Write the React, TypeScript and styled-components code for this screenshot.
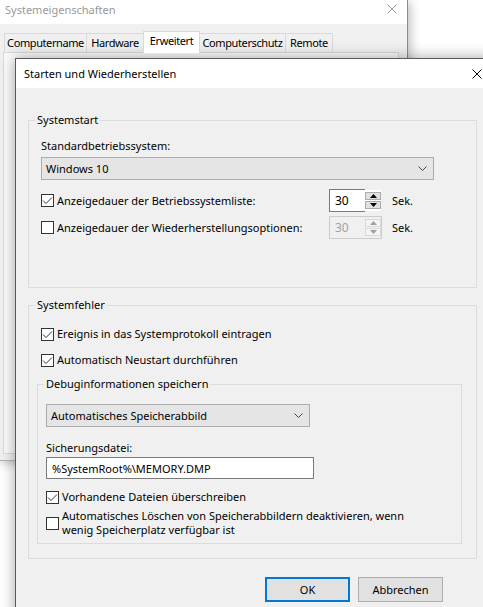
import styled, { createGlobalStyle } from "styled-components";

const GlobalStyle = createGlobalStyle`
  html, body {
    margin: 0;
    padding: 0;
  }
  body {
    width: 483px;
    height: 607px;
    overflow: hidden;
    background: #fff;
    font-family: "Segoe UI", "Noto Sans", "DejaVu Sans", sans-serif;
    font-size: 11px;
    color: #000;
  }
`;

const Desktop = styled.div`
  position: relative;
  width: 483px;
  height: 607px;
  overflow: hidden;
`;

/* --- parent window: Systemeigenschaften --- */

const BackWindow = styled.div`
  position: absolute;
  left: 0;
  top: 0;
  width: 407px;
  height: 460px;
  background: #f0f0f0;
  border-right: 1px solid #8c8c8c;
  border-bottom: 1px solid #b4b4b4;
  box-shadow: 2px 2px 10px rgba(0, 0, 0, 0.28);
`;

const BackTitleBar = styled.div`
  height: 24px;
  box-sizing: border-box;
  background: #fff;
  color: #999;
  display: flex;
  align-items: center;
  justify-content: space-between;
  padding: 0 10px 6px 5px;
`;

const TabStrip = styled.div`
  display: flex;
  align-items: flex-end;
  height: 21px;
  margin: 7px 0 0 4px;
`;

const Tab = styled.div<{ $active?: boolean; $w: number }>`
  position: relative;
  width: ${(p) => p.$w}px;
  height: ${(p) => (p.$active ? 22 : 19)}px;
  margin: 0 0 ${(p) => (p.$active ? -1 : 0)}px -1px;
  box-sizing: border-box;
  text-align: center;
  letter-spacing: -0.4px;
  white-space: nowrap;
  line-height: ${(p) => (p.$active ? 18 : 17)}px;
  border: 1px solid #d9d9d9;
  border-bottom: 0;
  background: ${(p) => (p.$active ? "#fff" : "#f0f0f0")};
  z-index: ${(p) => (p.$active ? 1 : 0)};
  &:first-child {
    margin-left: 0;
  }
`;

const TabPanel = styled.div`
  margin: 0 8px 0 3px;
  height: 400px;
  border: 1px solid #d9d9d9;
  background: #fbfbfb;
`;

/* --- dialog: Starten und Wiederherstellen --- */

const Dialog = styled.div`
  position: absolute;
  left: 15px;
  top: 58px;
  width: 484px;
  height: 560px;
  background: #f0f0f0;
  border: 1px solid #5a5a5a;
  box-shadow: 0 0 14px rgba(0, 0, 0, 0.35);
`;

const TitleBar = styled.div`
  height: 29px;
  background: #fff;
  display: flex;
  align-items: center;
  justify-content: space-between;
  padding-left: 8px;
`;

const CloseButton = styled.div`
  width: 46px;
  height: 29px;
  display: flex;
  align-items: center;
  justify-content: center;
`;

const DialogBody = styled.div`
  padding: 24px 0 0 12px;
`;

const Group = styled.fieldset<{ $w: number; $h: number; $mt?: number; $ml?: number }>`
  margin: ${(p) => p.$mt ?? 0}px 0 0 ${(p) => p.$ml ?? 0}px;
  padding: 0;
  min-width: 0;
  width: ${(p) => p.$w}px;
  height: ${(p) => p.$h}px;
  box-sizing: border-box;
  border: 1px solid #dcdcdc;
`;

const Legend = styled.legend`
  margin-left: 6px;
  padding: 0 2px;
  line-height: 16px;
`;

const GroupContent = styled.div<{ $pl: number; $pt: number }>`
  padding: ${(p) => p.$pt}px 0 0 ${(p) => p.$pl}px;
`;

const FieldLabel = styled.div<{ $mt?: number }>`
  line-height: 14px;
  margin-top: ${(p) => p.$mt ?? 0}px;
`;

const Select = styled.div<{ $w: number; $mt: number }>`
  width: ${(p) => p.$w}px;
  height: 23px;
  margin-top: ${(p) => p.$mt}px;
  box-sizing: border-box;
  display: flex;
  align-items: center;
  justify-content: space-between;
  padding: 0 6px 0 4px;
  background: #e5e5e5;
  border: 1px solid #acacac;
`;

const TextInput = styled.div<{ $w: number }>`
  width: ${(p) => p.$w}px;
  height: 22px;
  margin-top: 2px;
  box-sizing: border-box;
  display: flex;
  align-items: center;
  padding-left: 5px;
  background: #fff;
  border: 1px solid #7a7a7a;
`;

const SpinRow = styled.div<{ $mt: number }>`
  display: grid;
  grid-template-columns: 278px 53px auto;
  column-gap: 10px;
  align-items: center;
  height: 23px;
  margin-top: ${(p) => p.$mt}px;
`;

const CheckRow = styled.div<{ $mt?: number }>`
  display: flex;
  align-items: center;
  gap: 3px;
  line-height: 16px;
  margin-top: ${(p) => p.$mt ?? 0}px;
`;

const CheckLabel = styled.span`
  line-height: 14px;
  white-space: nowrap;
`;

const Box = styled.span`
  flex: none;
  width: 13px;
  height: 13px;
  box-sizing: border-box;
  border: 1px solid #333;
  background: #fff;
  display: flex;
  align-items: center;
  justify-content: center;
`;

const Spinner = styled.div`
  display: flex;
  height: 23px;
`;

const SpinValue = styled.div<{ $disabled?: boolean }>`
  width: 36px;
  box-sizing: border-box;
  display: flex;
  align-items: center;
  padding-left: 5px;
  font-size: 12px;
  color: ${(p) => (p.$disabled ? "#a0a0a0" : "#000")};
  background: ${(p) => (p.$disabled ? "#f0f0f0" : "#fff")};
  border: 1px solid ${(p) => (p.$disabled ? "#cccccc" : "#7a7a7a")};
  border-right: 0;
`;

const SpinButtons = styled.div<{ $disabled?: boolean }>`
  width: 17px;
  box-sizing: border-box;
  display: flex;
  flex-direction: column;
  gap: 1px;
  padding: 2px 0;
  border: 1px solid ${(p) => (p.$disabled ? "#cccccc" : "#f0f0f0")};
  border-left: 0;
  background: ${(p) => (p.$disabled ? "#f0f0f0" : "#fff")};
`;

const SpinButton = styled.div<{ $disabled?: boolean }>`
  flex: 1;
  display: flex;
  align-items: center;
  justify-content: center;
  background: ${(p) => (p.$disabled ? "#f4f4f4" : "#e1e1e1")};
  border: 1px solid ${(p) => (p.$disabled ? "#d9d9d9" : "#adadad")};
`;

const ButtonRow = styled.div`
  width: 449px;
  box-sizing: border-box;
  display: flex;
  justify-content: flex-end;
  gap: 8px;
  padding-right: 34px;
  margin-top: 18px;
`;

const Button = styled.button<{ $primary?: boolean }>`
  width: 85px;
  height: 25px;
  padding: 0;
  box-sizing: border-box;
  font: inherit;
  color: #000;
  background: #e1e1e1;
  border: ${(p) => (p.$primary ? "2px solid #0078d7" : "1px solid #adadad")};
`;

function CloseGlyph({ color, size }: { color: string; size: number }) {
  return (
    <svg width={size} height={size} viewBox={`0 0 ${size} ${size}`}>
      <path d={`M0.5 0.5 L${size - 0.5} ${size - 0.5} M${size - 0.5} 0.5 L0.5 ${size - 0.5}`} stroke={color} strokeWidth="1" fill="none" />
    </svg>
  );
}

function Chevron() {
  return (
    <svg width="9" height="5" viewBox="0 0 9 5">
      <path d="M0.5 0.5 L4.5 4.5 L8.5 0.5" stroke="#444" strokeWidth="1" fill="none" />
    </svg>
  );
}

function CheckBox({ checked }: { checked?: boolean }) {
  return (
    <Box>
      {checked && (
        <svg width="11" height="11" viewBox="0 0 11 11">
          <path d="M1 5.5 L4 8.5 L10 2.5" stroke="#333" strokeWidth="1" fill="none" />
        </svg>
      )}
    </Box>
  );
}

function Arrow({ up, color }: { up?: boolean; color: string }) {
  return (
    <svg width="7" height="4" viewBox="0 0 7 4">
      <path d={up ? "M0 4 L3.5 0 L7 4 Z" : "M0 0 L3.5 4 L7 0 Z"} fill={color} />
    </svg>
  );
}

function NumberSpinner({ value, disabled }: { value: number; disabled?: boolean }) {
  const arrow = disabled ? "#a0a0a0" : "#000";
  return (
    <Spinner>
      <SpinValue $disabled={disabled}>{value}</SpinValue>
      <SpinButtons $disabled={disabled}>
        <SpinButton $disabled={disabled}>
          <Arrow up color={arrow} />
        </SpinButton>
        <SpinButton $disabled={disabled}>
          <Arrow color={arrow} />
        </SpinButton>
      </SpinButtons>
    </Spinner>
  );
}

const tabs = [
  { label: "Computername", width: 83 },
  { label: "Hardware", width: 58 },
  { label: "Erweitert", width: 57 },
  { label: "Computerschutz", width: 87 },
  { label: "Remote", width: 48 },
];

export default function App() {
  return (
    <Desktop>
      <GlobalStyle />
      <BackWindow>
        <BackTitleBar>
          <span>Systemeigenschaften</span>
          <CloseGlyph color="#999" size={10} />
        </BackTitleBar>
        <TabStrip>
          {tabs.map((t) => (
            <Tab key={t.label} $w={t.width} $active={t.label === "Erweitert"}>
              {t.label}
            </Tab>
          ))}
        </TabStrip>
        <TabPanel />
      </BackWindow>

      <Dialog>
        <TitleBar>
          <span>Starten und Wiederherstellen</span>
          <CloseButton>
            <CloseGlyph color="#000" size={10} />
          </CloseButton>
        </TitleBar>
        <DialogBody>
          <Group $w={449} $h={176}>
            <Legend>Systemstart</Legend>
            <GroupContent $pl={12} $pt={11}>
              <FieldLabel>Standardbetriebssystem:</FieldLabel>
              <Select $w={393} $mt={4}>
                <span>Windows 10</span>
                <Chevron />
              </Select>
              <SpinRow $mt={9}>
                <CheckRow>
                  <CheckBox checked />
                  <CheckLabel>Anzeigedauer der Betriebssystemliste:</CheckLabel>
                </CheckRow>
                <NumberSpinner value={30} />
                <span>Sek.</span>
              </SpinRow>
              <SpinRow $mt={4}>
                <CheckRow>
                  <CheckBox />
                  <CheckLabel>Anzeigedauer der Wiederherstellungsoptionen:</CheckLabel>
                </CheckRow>
                <NumberSpinner value={30} disabled />
                <span>Sek.</span>
              </SpinRow>
            </GroupContent>
          </Group>

          <Group $w={449} $h={262} $mt={9}>
            <Legend>Systemfehler</Legend>
            <GroupContent $pl={12} $pt={14}>
              <CheckRow>
                <CheckBox checked />
                <CheckLabel>Ereignis in das Systemprotokoll eintragen</CheckLabel>
              </CheckRow>
              <CheckRow $mt={12}>
                <CheckBox checked />
                <CheckLabel>Automatisch Neustart durchführen</CheckLabel>
              </CheckRow>
              <Group $w={425} $h={168} $mt={9} $ml={-4}>
                <Legend>Debuginformationen speichern</Legend>
                <GroupContent $pl={8} $pt={12}>
                  <Select $w={264} $mt={0}>
                    <span>Automatisches Speicherabbild</span>
                    <Chevron />
                  </Select>
                  <FieldLabel $mt={14}>Sicherungsdatei:</FieldLabel>
                  <TextInput $w={268}>%SystemRoot%\MEMORY.DMP</TextInput>
                  <CheckRow $mt={11}>
                    <CheckBox checked />
                    <CheckLabel>Vorhandene Dateien überschreiben</CheckLabel>
                  </CheckRow>
                  <CheckRow $mt={5}>
                    <CheckBox />
                    <CheckLabel>
                      Automatisches Löschen von Speicherabbildern deaktivieren, wenn
                      <br />
                      wenig Speicherplatz verfügbar ist
                    </CheckLabel>
                  </CheckRow>
                </GroupContent>
              </Group>
            </GroupContent>
          </Group>

          <ButtonRow>
            <Button $primary>OK</Button>
            <Button>Abbrechen</Button>
          </ButtonRow>
        </DialogBody>
      </Dialog>
    </Desktop>
  );
}
